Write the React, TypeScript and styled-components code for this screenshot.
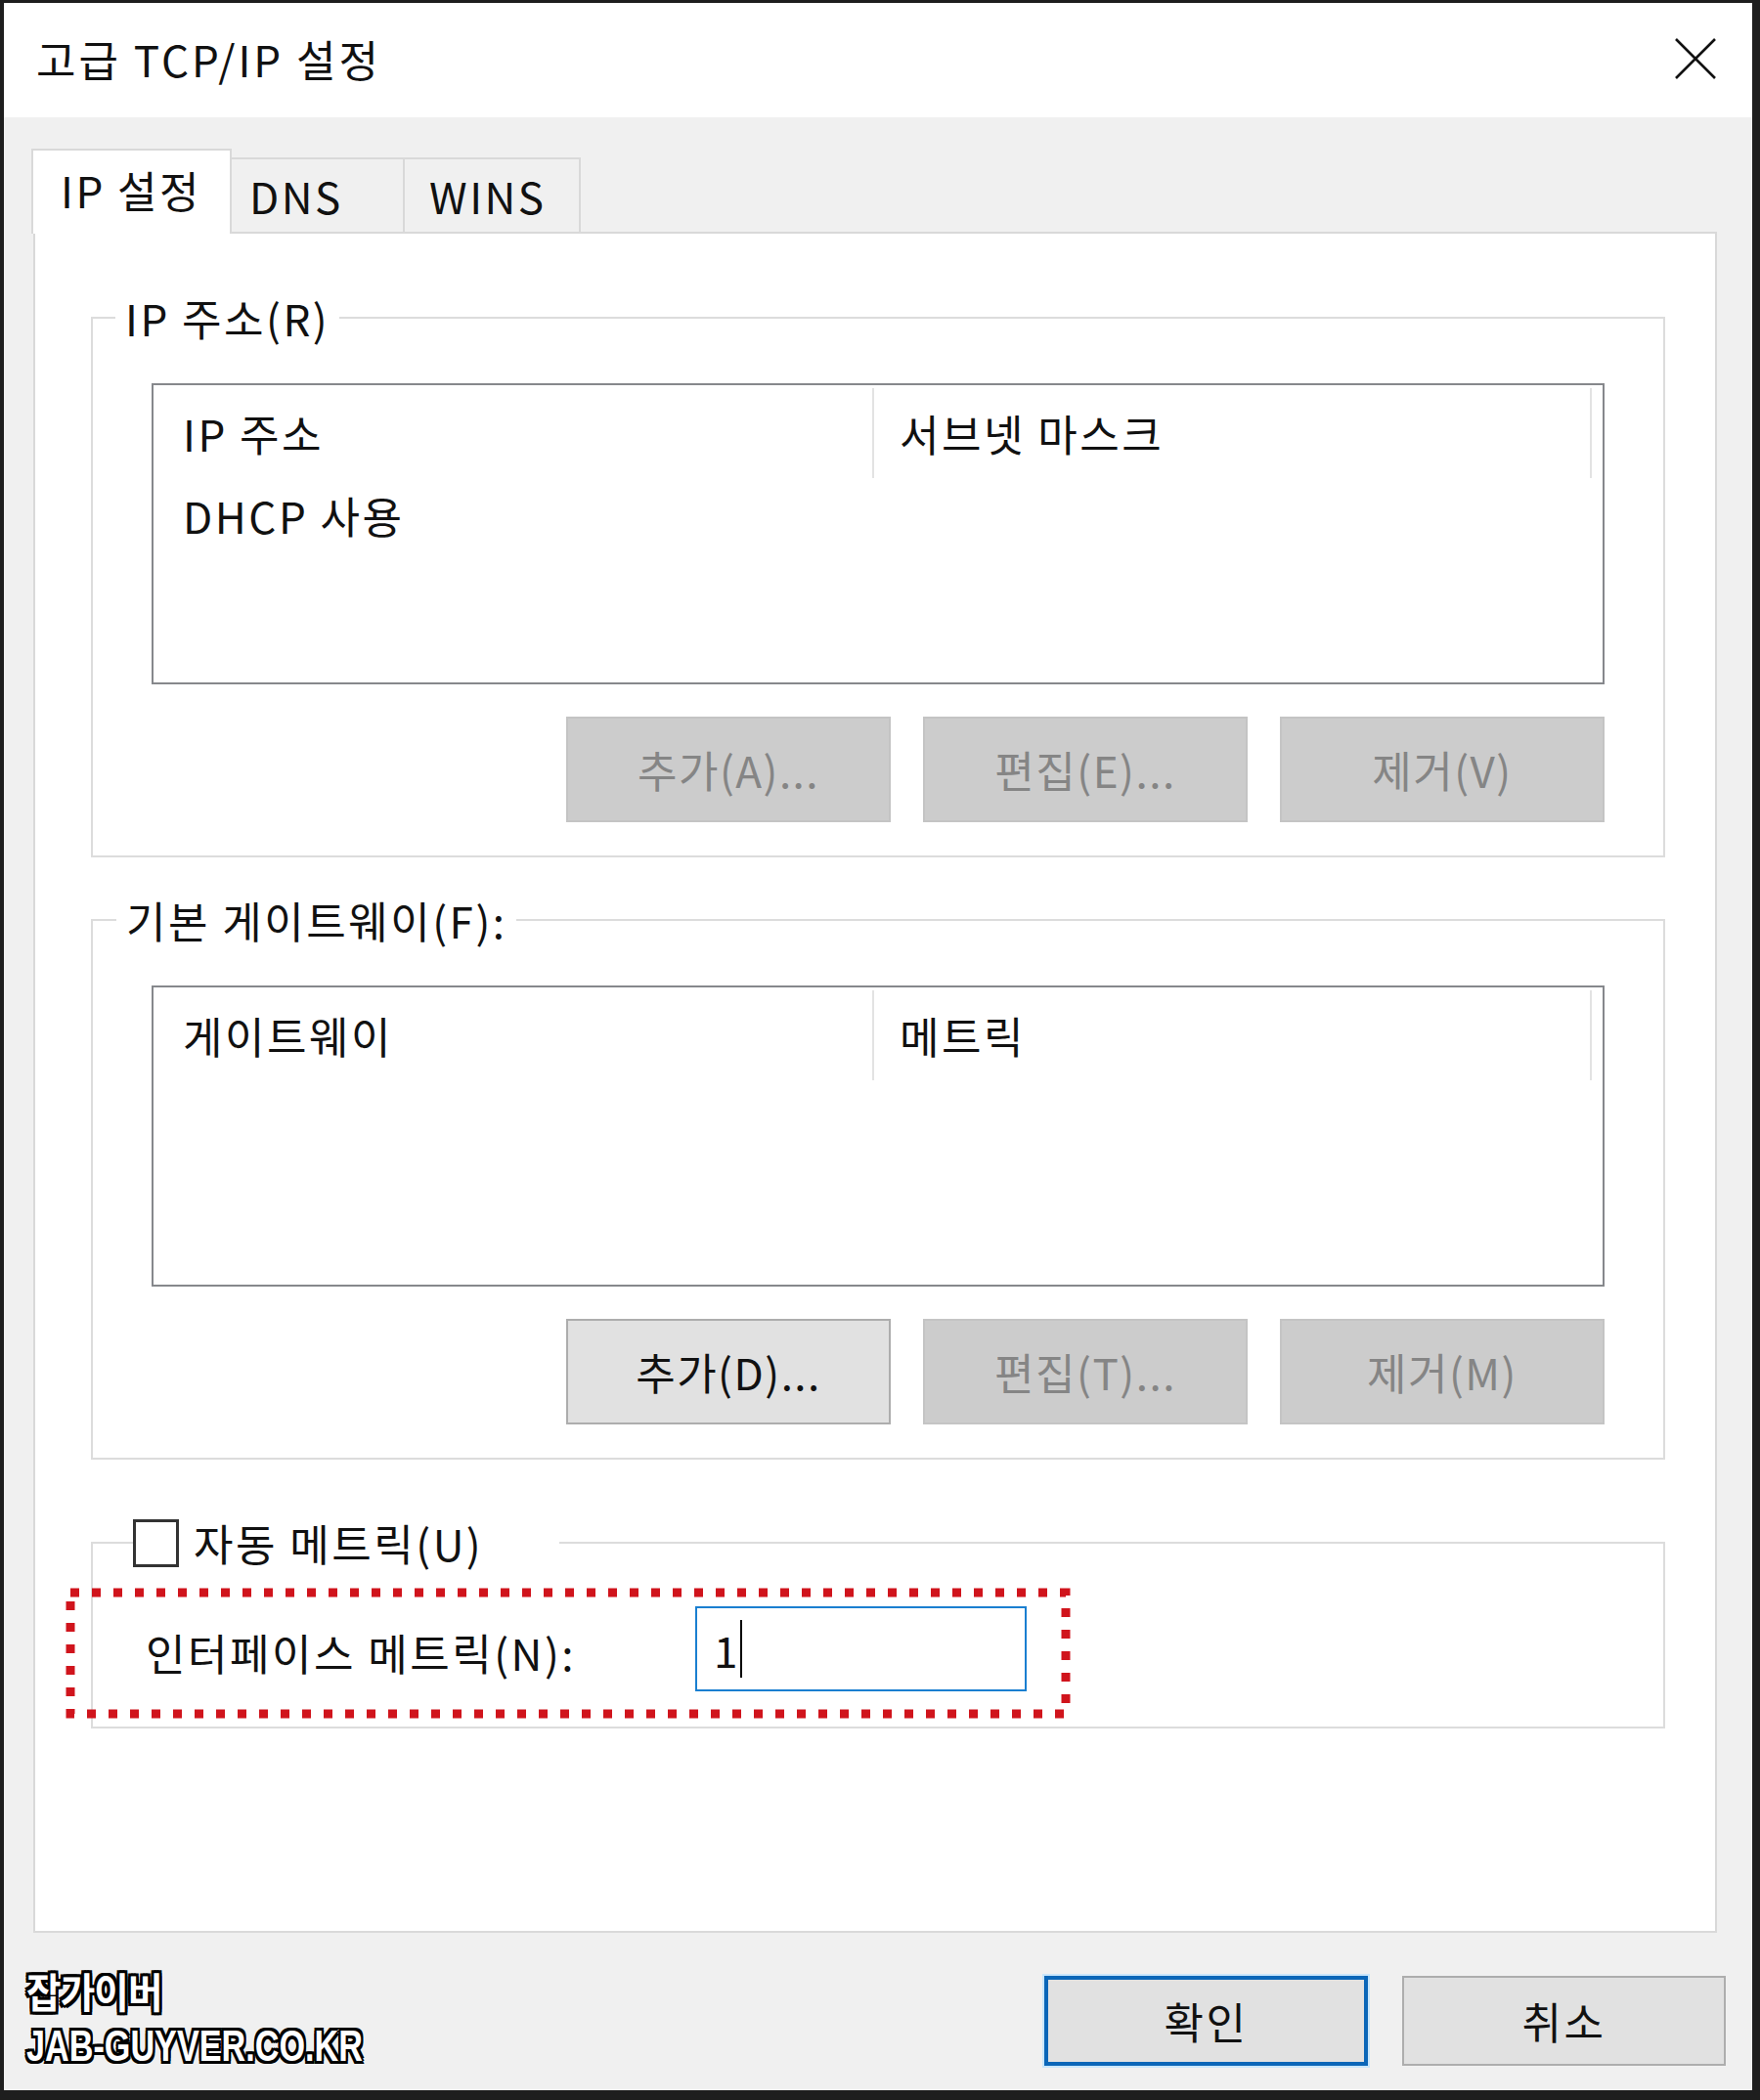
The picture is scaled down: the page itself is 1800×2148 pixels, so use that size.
import React from "react";
import styled, { createGlobalStyle } from "styled-components";

const FONT = `"Noto Sans CJK KR", "Noto Sans", "Liberation Sans", sans-serif`;
const LS = "2.5px";

const GlobalStyle = createGlobalStyle`
  html, body { margin: 0; padding: 0; background: #111; }
  body { font-family: ${FONT}; }
  *, *::before, *::after { box-sizing: border-box; }
`;

const Frame = styled.div`
  width: 1800px;
  height: 2148px;
  border-style: solid;
  border-color: #1e1e1e;
  border-width: 3px 8px 10px 4px;
  display: flex;
  flex-direction: column;
  background: #f0f0f0;
  font-family: ${FONT};
  color: #000;
`;

const TitleBar = styled.header`
  flex: 0 0 117px;
  background: #fff;
  display: flex;
  align-items: center;
  justify-content: space-between;
  padding: 0 37px 4px 33px;
`;

const Title = styled.h1`
  margin: 0;
  font-size: 44px;
  font-weight: 400;
  line-height: 1;
  letter-spacing: 3px;
  color: #111;
`;

const CloseButton = styled.button`
  width: 42px;
  height: 42px;
  border: 0;
  padding: 0;
  background: transparent;
  display: flex;
  align-items: center;
  justify-content: center;
`;

const Body = styled.main`
  flex: 1;
  display: flex;
  flex-direction: column;
  padding: 32px 36px 0 30px;
`;

const TabStrip = styled.div`
  display: flex;
  align-items: flex-end;
  height: 87px;
  margin: 0 0 -2px -2px;
  position: relative;
  z-index: 1;
`;

const Tab = styled.div<{ $active?: boolean; $w: number; $pl: number }>`
  width: ${(p) => p.$w}px;
  height: ${(p) => (p.$active ? 87 : 78)}px;
  padding: 0 0 ${(p) => (p.$active ? 6 : 0)}px ${(p) => p.$pl}px;
  display: flex;
  align-items: center;
  border: 2px solid #d9d9d9;
  border-bottom: ${(p) => (p.$active ? "none" : "2px solid #d9d9d9")};
  background: ${(p) => (p.$active ? "#fff" : "#f0f0f0")};
  font-size: 44px;
  letter-spacing: ${LS};
  line-height: 1;
  color: #111;
  & + & {
    margin-left: -2px;
  }
`;

const Panel = styled.section`
  flex: 1;
  background: #fff;
  border: 2px solid #d9d9d9;
  padding: 60px 51px 0 57px;
  display: flex;
  flex-direction: column;
`;

const Group = styled.fieldset<{ $mt?: number }>`
  margin: ${(p) => p.$mt ?? 0}px 0 0 0;
  padding: 0;
  border: 2px solid #dcdcdc;
  min-width: 0;
`;

const Legend = styled.legend<{ $ml?: number; $pr?: number }>`
  margin-left: ${(p) => p.$ml ?? 23}px;
  padding: 0 ${(p) => p.$pr ?? 10}px 0 10px;
  font-size: 44px;
  letter-spacing: ${LS};
  line-height: 52px;
  height: 52px;
  color: #111;
  display: flex;
  align-items: center;
`;

const CheckLegend = styled(Legend)`
  padding-left: 0;
  gap: 15px;
`;

const CheckBox = styled.span`
  width: 47px;
  height: 49px;
  border: 3px solid #333;
  background: #fff;
  display: inline-block;
`;

const GroupBody = styled.div<{ $pad: string }>`
  padding: ${(p) => p.$pad};
  display: flex;
  flex-direction: column;
`;

const ListView = styled.div`
  height: 308px;
  border: 2px solid #86888c;
  background: #fff;
  display: flex;
  flex-direction: column;
`;

const ListHeader = styled.div`
  display: grid;
  grid-template-columns: 737px 734px 1fr;
  height: 95px;
  padding-top: 3px;
`;

const HeaderCell = styled.div<{ $pl: number; $divider?: boolean }>`
  padding-left: ${(p) => p.$pl}px;
  display: flex;
  align-items: center;
  border-right: ${(p) => (p.$divider ? "2px solid #e3e3e3" : "none")};
  font-size: 44px;
  letter-spacing: ${LS};
  line-height: 1;
  color: #111;
`;

const ListRow = styled.div`
  height: 76px;
  padding-left: 30px;
  display: flex;
  align-items: center;
  font-size: 44px;
  letter-spacing: ${LS};
  color: #111;
`;

const ButtonRow = styled.div`
  display: flex;
  justify-content: flex-end;
  gap: 33px;
  margin-top: 33px;
`;

const Button = styled.button<{ $disabled?: boolean }>`
  width: 332px;
  height: 108px;
  font-family: ${FONT};
  font-size: 44px;
  letter-spacing: 1.5px;
  line-height: 1;
  border: 2px solid ${(p) => (p.$disabled ? "#c4c4c4" : "#adadad")};
  background: ${(p) => (p.$disabled ? "#cccccc" : "#e1e1e1")};
  color: ${(p) => (p.$disabled ? "#858585" : "#111")};
  padding: 0;
`;

const MetricRow = styled.div`
  position: relative;
  display: flex;
  align-items: center;
`;

const MetricLabel = styled.label`
  width: 562px;
  font-size: 44px;
  letter-spacing: ${LS};
  line-height: 1;
  color: #111;
  padding-top: 6px;
`;

const TextBox = styled.div`
  width: 339px;
  height: 87px;
  border: 2px solid #1a7fd0;
  background: #fff;
  display: flex;
  align-items: center;
  padding-left: 17px;
  font-size: 44px;
  line-height: 1;
  color: #111;
`;

const Caret = styled.span`
  width: 2px;
  height: 59px;
  background: #000;
  margin-left: 3px;
`;

const Annotation = styled.svg`
  position: absolute;
  left: -81px;
  top: -18px;
  pointer-events: none;
  overflow: visible;
`;

const Footer = styled.footer`
  flex: 0 0 161px;
  display: flex;
  justify-content: space-between;
  align-items: flex-start;
  padding: 28px 27px 0 23px;
`;

const Watermark = styled.div`
  display: flex;
  flex-direction: column;
  align-items: flex-start;
  font-weight: 700;
  color: #fff;
  text-shadow: -3px -3px 0 #000, 3px -3px 0 #000, -3px 3px 0 #000, 3px 3px 0 #000,
    0 -3px 0 #000, 0 3px 0 #000, -3px 0 0 #000, 3px 0 0 #000;
`;

const WatermarkLine = styled.span<{ $size: number; $scale: number; $latin?: boolean; $mt?: number }>`
  display: block;
  font-family: ${(p) => (p.$latin ? `"Liberation Sans", Arial, sans-serif` : FONT)};
  font-size: ${(p) => p.$size}px;
  line-height: normal;
  letter-spacing: ${(p) => (p.$latin ? 0 : -1)}px;
  white-space: nowrap;
  transform: scaleX(${(p) => p.$scale});
  transform-origin: left center;
  margin-top: ${(p) => p.$mt ?? 0}px;
`;

const DialogButtons = styled.div`
  display: flex;
  gap: 35px;
  margin-top: 16px;
`;

const DialogButton = styled.button<{ $default?: boolean }>`
  width: 331px;
  height: 92px;
  font-family: ${FONT};
  font-size: 44px;
  letter-spacing: ${LS};
  line-height: 1;
  color: #111;
  background: #e1e1e1;
  padding: 0;
  border: ${(p) => (p.$default ? "4px solid #0a66b8" : "2px solid #adadad")};
  box-shadow: ${(p) => (p.$default ? "0 0 0 2px #c9e6fb" : "none")};
`;

export default function App() {
  return (
    <>
      <GlobalStyle />
      <Frame>
        <TitleBar>
          <Title>고급 TCP/IP 설정</Title>
          <CloseButton aria-label="닫기">
            <svg width="42" height="42" viewBox="0 0 42 42">
              <path d="M1 1 L41 41 M41 1 L1 41" stroke="#111" strokeWidth="2.6" fill="none" />
            </svg>
          </CloseButton>
        </TitleBar>
        <Body>
          <TabStrip>
            <Tab $active $w={205} $pl={28}>IP 설정</Tab>
            <Tab $w={179} $pl={18}>DNS</Tab>
            <Tab $w={182} $pl={25}>WINS</Tab>
          </TabStrip>
          <Panel>
            <Group>
              <Legend>IP 주소(R)</Legend>
              <GroupBody $pad="41px 60px 34px 60px">
                <ListView>
                  <ListHeader>
                    <HeaderCell $pl={30} $divider>IP 주소</HeaderCell>
                    <HeaderCell $pl={26} $divider>서브넷 마스크</HeaderCell>
                    <HeaderCell $pl={0} />
                  </ListHeader>
                  <ListRow>DHCP 사용</ListRow>
                </ListView>
                <ButtonRow>
                  <Button $disabled>추가(A)...</Button>
                  <Button $disabled>편집(E)...</Button>
                  <Button $disabled>제거(V)</Button>
                </ButtonRow>
              </GroupBody>
            </Group>
            <Group $mt={38}>
              <Legend $ml={24}>기본 게이트웨이(F):</Legend>
              <GroupBody $pad="41px 60px 34px 60px">
                <ListView>
                  <ListHeader>
                    <HeaderCell $pl={30} $divider>게이트웨이</HeaderCell>
                    <HeaderCell $pl={26} $divider>메트릭</HeaderCell>
                    <HeaderCell $pl={0} />
                  </ListHeader>
                </ListView>
                <ButtonRow>
                  <Button>추가(D)...</Button>
                  <Button $disabled>편집(T)...</Button>
                  <Button $disabled>제거(M)</Button>
                </ButtonRow>
              </GroupBody>
            </Group>
            <Group $mt={59}>
              <CheckLegend $ml={41} $pr={78}>
                <CheckBox />
                <span>자동 메트릭(U)</span>
              </CheckLegend>
              <GroupBody $pad="39px 60px 36px 54px">
                <MetricRow>
                  <MetricLabel>인터페이스 메트릭(N):</MetricLabel>
                  <TextBox>
                    1<Caret />
                  </TextBox>
                  <Annotation width="1026" height="132" viewBox="0 0 1026 132">
                    <rect
                      x="4"
                      y="4"
                      width="1018"
                      height="124"
                      fill="none"
                      stroke="#d0141c"
                      strokeWidth="9"
                      strokeDasharray="9 13"
                    />
                  </Annotation>
                </MetricRow>
              </GroupBody>
            </Group>
          </Panel>
        </Body>
        <Footer>
          <Watermark>
            <WatermarkLine $size={42} $scale={0.92}>잡가이버</WatermarkLine>
            <WatermarkLine $size={45} $scale={0.76} $latin $mt={1}>JAB-GUYVER.CO.KR</WatermarkLine>
          </Watermark>
          <DialogButtons>
            <DialogButton $default>확인</DialogButton>
            <DialogButton>취소</DialogButton>
          </DialogButtons>
        </Footer>
      </Frame>
    </>
  );
}
